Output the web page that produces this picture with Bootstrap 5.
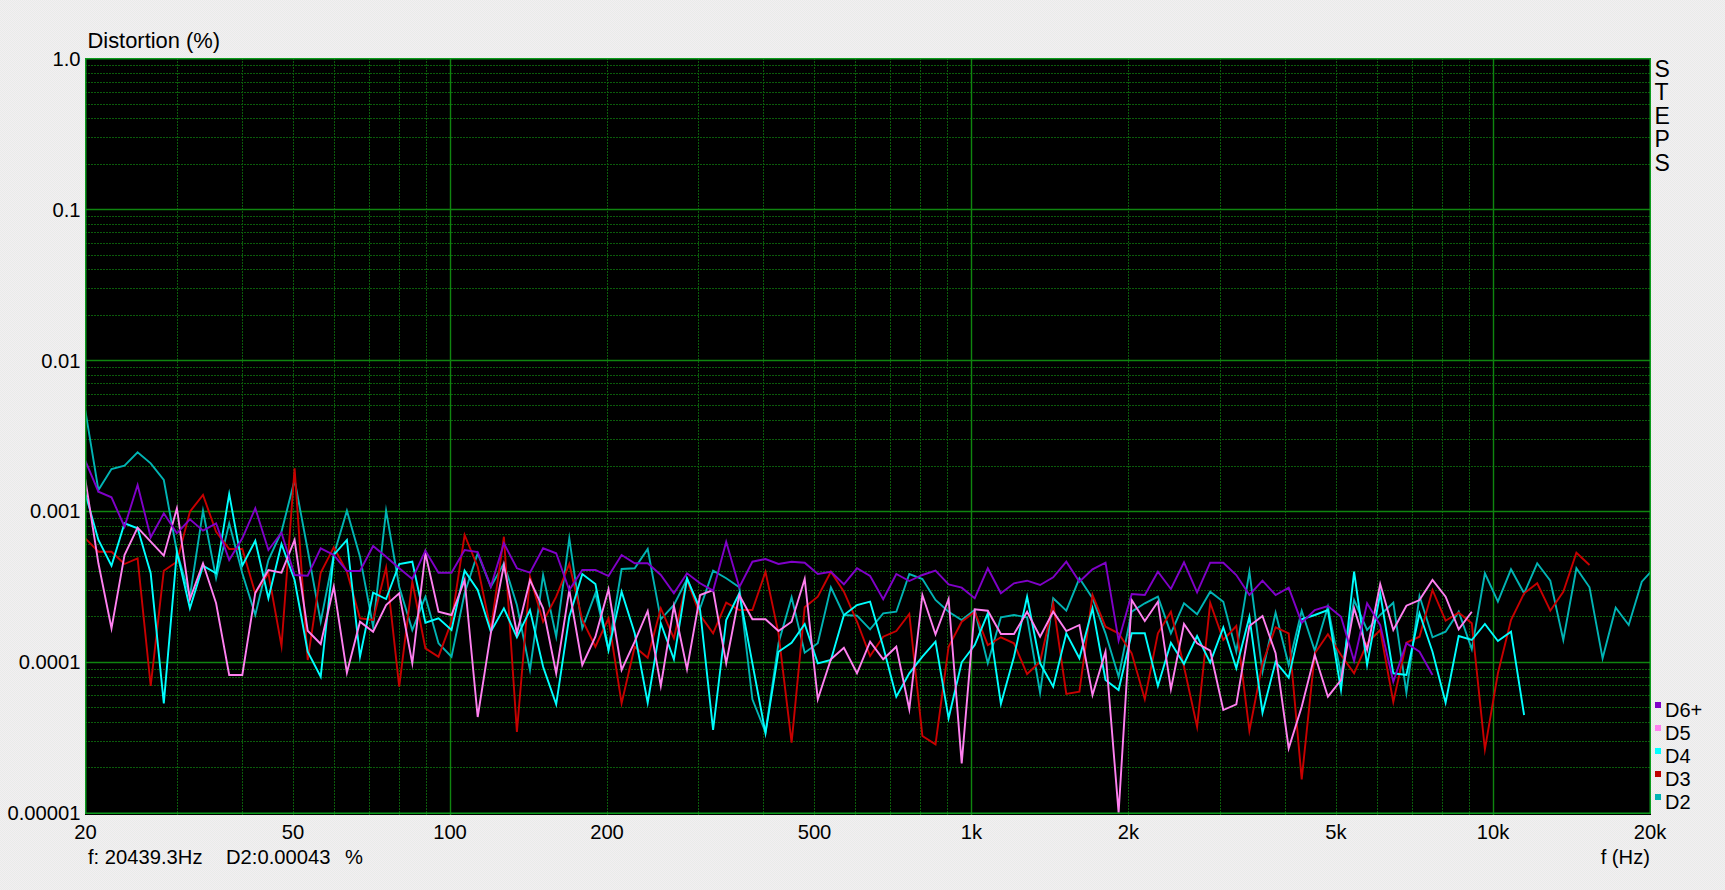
<!DOCTYPE html>
<html lang="en">
<head>
<meta charset="utf-8">
<title>Distortion (%)</title>
<link href="https://cdn.jsdelivr.net/npm/bootstrap@5.3.0/dist/css/bootstrap.min.css" rel="stylesheet">
<style>
html,body{height:100%}
body{margin:0;color:#000;font-family:"Liberation Sans",Arial,sans-serif;font-size:20.2px;line-height:1;overflow:hidden;
  background:repeating-conic-gradient(#f3eef2 0 25%,#e8ece9 0 50%) 0 0/2px 2px}
.shot{width:1725px;height:890px}
.title-row{height:58px;padding-left:87.5px;padding-top:30px;font-size:21.9px}
.plot-row{height:757px}
.y-col{width:85px;margin-top:-9px;margin-bottom:-8px;padding-right:4.5px}
.y-col span{height:20px;line-height:20px}
#plot{display:block;width:1566px;height:757px;background:#000}
.side-col{padding-left:3.5px;margin-bottom:1px}
.steps{font-size:23px;line-height:23.4px}
.leg-item{height:23px;line-height:23px;gap:4.5px;font-size:20px}
.leg-swatch{width:6px;height:6px;margin-top:-11.5px;flex:none}
.c6{background:#8000c8}.c5{background:#ff80f0}.c4{background:#00ffff}.c3{background:#c00000}.c2{background:#00b4b4}
.x-row{height:32px}
.x-row span{top:7px;height:20px;line-height:20px}
.status-row{padding-left:88px;padding-right:75px;height:20px;line-height:20px}
.status-row .stat-a{width:138px}
.status-row .stat-b{width:119px}
</style>
</head>
<body>
<div class="shot d-flex flex-column">
  <div class="title-row">Distortion (%)</div>
  <div class="plot-row d-flex">
    <div class="y-col d-flex flex-column justify-content-between text-end">
      <span>1.0</span><span>0.1</span><span>0.01</span><span>0.001</span><span>0.0001</span><span>0.00001</span>
    </div>
    <svg id="plot" viewBox="85 58 1566 757" xmlns="http://www.w3.org/2000/svg"></svg>
    <div class="side-col d-flex flex-column justify-content-between">
      <div class="steps d-flex flex-column"><span>S</span><span>T</span><span>E</span><span>P</span><span>S</span></div>
      <div class="d-flex flex-column">
        <div class="leg-item d-flex align-items-center"><i class="leg-swatch c6"></i>D6+</div>
        <div class="leg-item d-flex align-items-center"><i class="leg-swatch c5"></i>D5</div>
        <div class="leg-item d-flex align-items-center"><i class="leg-swatch c4"></i>D4</div>
        <div class="leg-item d-flex align-items-center"><i class="leg-swatch c3"></i>D3</div>
        <div class="leg-item d-flex align-items-center"><i class="leg-swatch c2"></i>D2</div>
      </div>
    </div>
  </div>
  <div class="x-row position-relative" id="xaxis"></div>
  <div class="status-row d-flex">
    <span class="stat-a">f: 20439.3Hz</span><span class="stat-b">D2:0.00043</span><span>%</span><span class="ms-auto">f (Hz)</span>
  </div>
</div>
<script>
const NS='http://www.w3.org/2000/svg',svg=document.getElementById('plot');
const L=85.5,R=1650,T=58.7,B=813.3,DX=(R-L)/3,DY=(B-T)/5;
const fx=f=>L+DX*Math.log10(f/20);
function el(n,a){const e=document.createElementNS(NS,n);for(const k in a)e.setAttribute(k,a[k]);svg.appendChild(e);return e}
const px=v=>Math.round(v-.5)+.5;
function hline(y,c,d){el('line',Object.assign({x1:85,x2:1651,y1:px(y),y2:px(y),stroke:c},d?{'stroke-width':1,'shape-rendering':'crispEdges','stroke-dasharray':'2 1'}:{'stroke-width':1.4}))}
function vline(x,c,d){el('line',Object.assign({x1:px(x),x2:px(x),y1:58,y2:815,stroke:c},d?{'stroke-width':1,'shape-rendering':'crispEdges','stroke-dasharray':'2 1'}:{'stroke-width':1.4}))}
const MIN='#0b5c0b',MAJ='#0f850f';
for(let k=0;k<5;k++)for(let m=2;m<10;m++)hline(T+DY*k+DY*(1-Math.log10(m)),MIN,true);
[30,40,50,60,70,80,90,200,300,400,500,600,700,800,900,2000,3000,4000,5000,6000,7000,8000,9000].forEach(f=>vline(fx(f),MIN,true));
[1,2,3,4].forEach(k=>hline(T+DY*k,MAJ));
[100,1000,10000].forEach(f=>vline(fx(f),MAJ));
const clip=el('clipPath',{id:'cp'});const cr=document.createElementNS(NS,'rect');
cr.setAttribute('x',85.5);cr.setAttribute('y',59);cr.setAttribute('width',1565);cr.setAttribute('height',755);clip.appendChild(cr);
const A=a=>a.map(v=>400+v/3),Z=a=>a.map(v=>500+v/3);
const data={
c2:['#00b4b4',[...A([31,270,207,197,157,190,240,455,590,332,535,370,520,645,480,395,240,450,665,465,332,470,680,332,560,690,590,730,770,580,460,560,490,615,810,525,710]),
 ...Z([115,385,280,450,207,205,147,358,315,238,325,212,235,262,598,697,430,292,458,430,262,345,347,388,340,335,222,237,300,335,360,330,490,352,345,352,578,295,332,235,295,400,530,335,310,290,400,310,343,275,305,455,215,515,338,495,332,452,320,525,300,390,345,308,578,288,412,395,335,448,220,305,208,280,190,242,420,205,262,475,323,375,245,202])]],
c3:['#c80000',[...A([415,455,455,492,475,858,512,485,335,285,395,447,447,580,520,738,205,780,518,442,515,655,660,503,860,545,745,770,665,405,500,690,410,996,530,665,590]),
 ...Z([192,360,440,355,610,440,473,325,415,240,345,400,308,330,330,215,400,728,322,290,215,275,365,468,410,393,342,708,733,440,365,335,435,412,430,522,485,310,582,575,285,380,400,460,598,400,335,500,680,308,420,378,692,490,382,400,838,460,403,465,520,430,390,606,428,410,270,362,338,370,748,520,360,280,250,332,275,158,195])]],
c4:['#00ffff',[...A([280,420,497,370,385,520,910,455,625,497,520,282,497,422,595,432,540,755,830,465,420,770,578,597,492,485,668,655,690,512,570,695,625,712,630,800,913]),
 ...Z([350,222,252,450,275,400,608,370,478,235,330,690,360,280,490,700,455,428,372,490,480,345,315,305,440,590,520,470,425,655,487,435,340,612,470,290,490,560,400,475,325,540,570,400,400,558,428,492,408,488,382,505,350,638,485,533,358,345,330,570,215,495,280,520,525,340,455,608,408,420,372,423,395,645])]],
c5:['#ff80f0',[...A([238,490,685,465,383,425,467,325,598,490,610,825,825,578,510,518,420,692,732,560,818,665,695,615,580,790,460,635,645,540,951,700,495,700,540,625,820]),
 ...Z([270,495,410,268,510,425,333,558,318,508,285,270,490,285,358,358,393,365,237,598,478,443,520,425,478,440,628,285,403,297,790,328,332,402,402,335,410,335,393,375,585,455,938,300,363,305,568,372,430,452,630,613,378,348,460,745,620,465,590,540,325,450,252,390,317,300,240,290,388,335])]],
c6:['#8000c8',[...A([182,275,292,380,255,412,340,400,358,392,370,480,415,325,450,398,525,527,445,465,513,513,438,470,505,537,452,518,518,450,456,560,430,505,518,445,460]),
 ...Z([270,210,210,228,165,190,190,225,280,220,250,272,125,262,185,177,192,185,188,222,215,253,205,228,298,222,243,225,212,253,263,295,205,280,250,242,255,232,185,245,208,188,422,282,285,215,267,187,277,188,188,225,285,242,285,263,368,330,318,350,483,310,375,545,430,455,525])]]
};
svg.appendChild(clip);
const g=el('g',{'clip-path':'url(#cp)',fill:'none','stroke-width':1.9,'stroke-linejoin':'miter','stroke-miterlimit':8});
for(const k of ['c2','c3','c4','c5','c6']){
  const [c,ys]=data[k];
  const p=document.createElementNS(NS,'polyline');
  p.setAttribute('stroke',c);
  p.setAttribute('points',ys.map((y,i)=>(85.3+13.08*i).toFixed(1)+','+y.toFixed(1)).join(' '));
  g.appendChild(p);
}
el('rect',{x:85.75,y:58.75,width:1564.5,height:754.5,fill:'none',stroke:'#0c9a1c','stroke-width':1.5});
const xa=document.getElementById('xaxis');
[[20,'20'],[50,'50'],[100,'100'],[200,'200'],[500,'500'],[1000,'1k'],[2000,'2k'],[5000,'5k'],[10000,'10k'],[20000,'20k']].forEach(([f,t])=>{
  const s=document.createElement('span');s.className='position-absolute translate-middle-x';s.style.left=fx(f).toFixed(1)+'px';s.textContent=t;xa.appendChild(s);
});
</script>
<script src="https://cdn.jsdelivr.net/npm/bootstrap@5.3.0/dist/js/bootstrap.bundle.min.js"></script>
</body>
</html>
